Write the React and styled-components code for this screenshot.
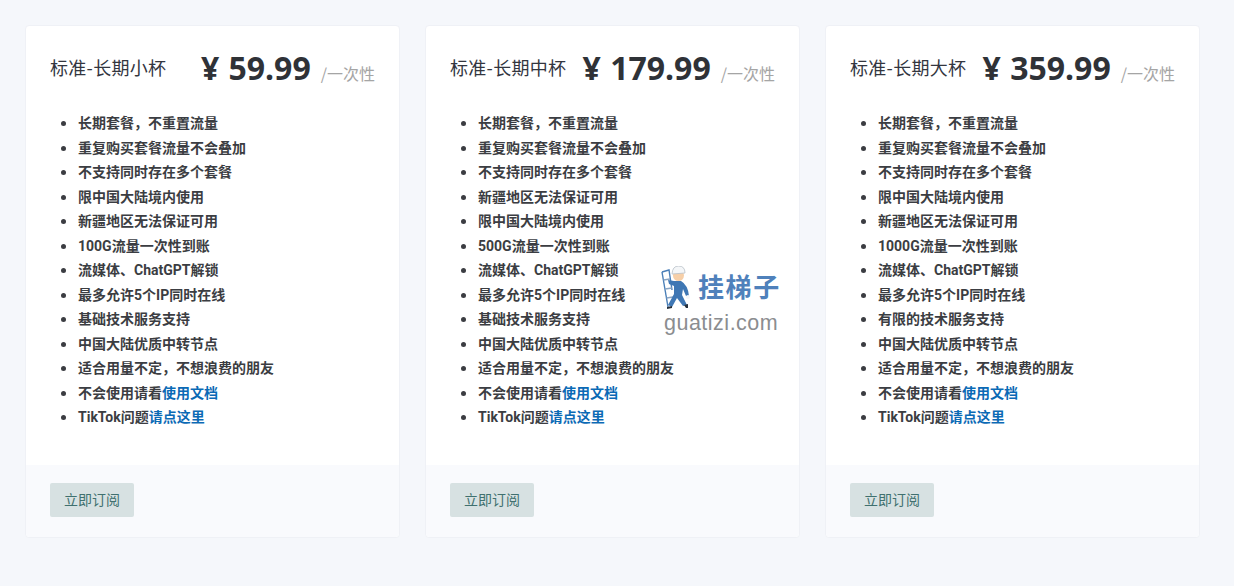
import React from "react";
import styled, { createGlobalStyle } from "styled-components";

const Global = createGlobalStyle`
  html, body { margin: 0; padding: 0; background: #f5f7fb; }
  body { font-family: "Noto Sans CJK SC", sans-serif; color: #3f4254; }
`;
const Page = styled.main`
  position: relative;
  width: 1234px;
  height: 586px;
  box-sizing: border-box;
  padding: 25px 34px 0 25px;
  overflow: hidden;
`;
const Grid = styled.div`
  display: grid;
  grid-template-columns: repeat(3, 375px);
  column-gap: 25px;
`;
const Card = styled.section`
  height: 513px;
  box-sizing: border-box;
  display: flex;
  flex-direction: column;
  background: #fff;
  border-radius: 4px;
  border: 1px solid #eff1f6;
`;
const Header = styled.header`
  display: flex;
  align-items: baseline;
  justify-content: space-between;
  padding: 22px 24px 0 24px;
  height: 47px;
  flex: none;
`;
const Title = styled.h3`
  margin: 0;
  font: 400 18px/40px "Noto Sans CJK SC", sans-serif;
  letter-spacing: .3px;
  color: #33363f;
  position: relative;
  top: -5px;
`;
const PriceBox = styled.div`
  display: flex;
  align-items: baseline;
  gap: 10px;
`;
const Price = styled.span`
  font: 700 32px/40px "Noto Sans", "Noto Sans CJK SC", sans-serif;
  color: #2f3237;
  white-space: pre;
  word-spacing: 1px;
`;
const Per = styled.span`
  font: 400 16px/24px "Noto Sans CJK SC", sans-serif;
  color: #a5a5a5;
`;
const Features = styled.ul`
  margin: 0;
  padding: 16px 0 0 52px;
  flex: 1;
  list-style: none;
`;
const Feature = styled.li`
  position: relative;
  height: 24.5px;
  font: 700 14px/24.5px Roboto, "Noto Sans CJK SC", sans-serif;
  color: #3b3d42;
  &::before {
    content: "";
    position: absolute;
    left: -17px;
    top: 10px;
    width: 5px;
    height: 5px;
    border-radius: 50%;
    background: #3b3d42;
  }
`;
const DocLink = styled.a`
  color: #0b6ab5;
  text-decoration: none;
`;
const Footer = styled.footer`
  flex: none;
  height: 72px;
  box-sizing: border-box;
  padding: 18px 24px 0;
  background: #f9fafd;
  border-radius: 0 0 4px 4px;
`;
const Subscribe = styled.button`
  display: block;
  width: 84px;
  height: 34px;
  border: 0;
  border-radius: 2px;
  background: #d7e1e2;
  color: #40706f;
  font: 400 14px/32px "Noto Sans CJK SC", sans-serif;
  padding: 0 0 2px;
`;
const Mark = styled.div`
  position: absolute;
  left: 660px;
  top: 265px;
  width: 125px;
  height: 72px;
`;
const MarkName = styled.span`
  position: absolute;
  left: 38px;
  top: 2px;
  font: 700 26px/38px "Noto Sans CJK SC", sans-serif;
  letter-spacing: 1.6px;
  color: #4f81bb;
`;
const MarkDomain = styled.span`
  position: absolute;
  left: 4px;
  top: 45px;
  font: 400 21.5px/26px "Liberation Sans", sans-serif;
  letter-spacing: .5px;
  color: #8b8d90;
`;
const MarkIcon = styled.svg`
  position: absolute;
  left: 0;
  top: 1px;
`;

const plans = [
  { name: "标准-长期小杯", price: "¥ 59.99", items: ["长期套餐，不重置流量","重复购买套餐流量不会叠加","不支持同时存在多个套餐","限中国大陆境内使用","新疆地区无法保证可用","100G流量一次性到账","流媒体、ChatGPT解锁","最多允许5个IP同时在线","基础技术服务支持","中国大陆优质中转节点","适合用量不定，不想浪费的朋友"] },
  { name: "标准-长期中杯", price: "¥ 179.99", items: ["长期套餐，不重置流量","重复购买套餐流量不会叠加","不支持同时存在多个套餐","新疆地区无法保证可用","限中国大陆境内使用","500G流量一次性到账","流媒体、ChatGPT解锁","最多允许5个IP同时在线","基础技术服务支持","中国大陆优质中转节点","适合用量不定，不想浪费的朋友"] },
  { name: "标准-长期大杯", price: "¥ 359.99", items: ["长期套餐，不重置流量","重复购买套餐流量不会叠加","不支持同时存在多个套餐","限中国大陆境内使用","新疆地区无法保证可用","1000G流量一次性到账","流媒体、ChatGPT解锁","最多允许5个IP同时在线","有限的技术服务支持","中国大陆优质中转节点","适合用量不定，不想浪费的朋友"] },
];

const Worker = () => (
  <MarkIcon width="36" height="44" viewBox="0 0 36 44">
    <g fill="none" stroke="#4a7fb8" strokeWidth="1.4">
      <path d="M2 6 L8 41" />
      <path d="M2 6 L9 4 L12 24" />
      <path d="M3.5 14 L10 13 M5 23 L12 22 M6.5 32 L13 31" stroke="#8aa5c4" />
    </g>
    <circle cx="18.5" cy="9.5" r="5.5" fill="#f6cfa8" />
    <path d="M12 8 Q12.5 0 18.5 0 Q25 0 25 7 Z" fill="#f4f6f8" stroke="#b8c0c8" strokeWidth=".8" />
    <path d="M8 14 L14 15 L21 15 Q28 19 29 30 L26 30 L23 23 L22 29 L27 39 L23 40 L17 32 L12 41 L8 39 L14 28 L14 20 L9 18 Z" fill="#3f77b4" />
    <circle cx="28" cy="31" r="2" fill="#f4f6f8" />
    <path d="M7 41 L12 40 L12 42 L7 43 Z M24 39 L28 38 L28 42 L26 42 Z" fill="#26303c" />
  </MarkIcon>
);

export default function App() {
  return (
    <Page>
      <Global />
      <Grid>
        {plans.map((p) => (
          <Card key={p.name}>
            <Header>
              <Title>{p.name}</Title>
              <PriceBox>
                <Price>{p.price}</Price>
                <Per>/一次性</Per>
              </PriceBox>
            </Header>
            <Features>
              {p.items.map((t, i) => <Feature key={i}>{t}</Feature>)}
              <Feature>不会使用请看<DocLink href="#">使用文档</DocLink></Feature>
              <Feature>TikTok问题<DocLink href="#">请点这里</DocLink></Feature>
            </Features>
            <Footer><Subscribe>立即订阅</Subscribe></Footer>
          </Card>
        ))}
      </Grid>
      <Mark>
        <Worker />
        <MarkName>挂梯子</MarkName>
        <MarkDomain>guatizi.com</MarkDomain>
      </Mark>
    </Page>
  );
}
